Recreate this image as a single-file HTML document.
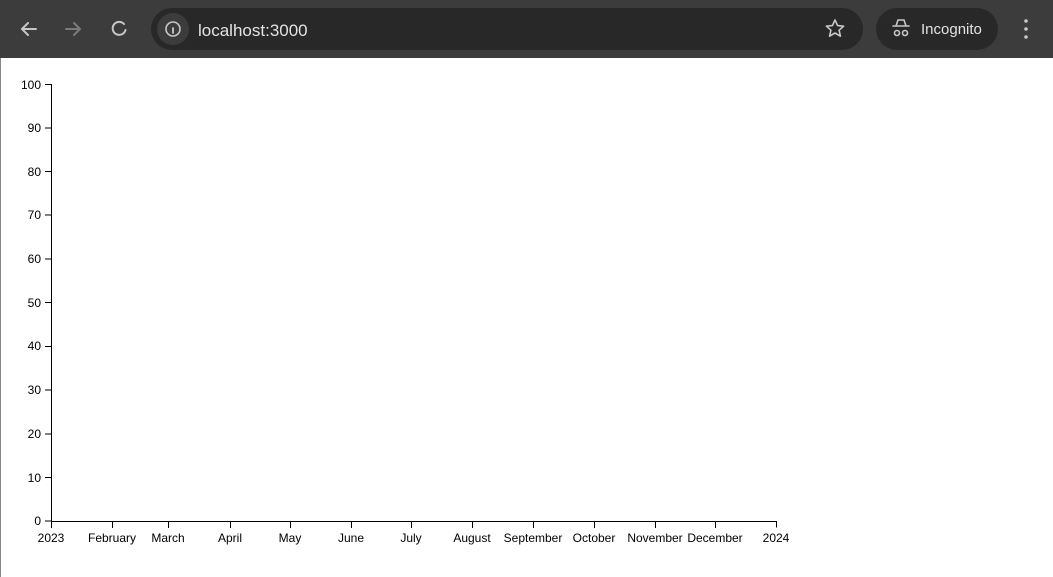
<!DOCTYPE html>
<html><head><style>
body{margin:0;width:1053px;height:577px;overflow:hidden;background:#fff;font-family:"Liberation Sans",Arial,sans-serif;}
.bar{position:absolute;left:0;top:0;width:1053px;height:58px;background:#3c3c3c;}
.omni{position:absolute;left:151px;top:8px;width:712px;height:42px;border-radius:21px;background:#282828;}
.info{position:absolute;left:157px;top:13px;width:32px;height:32px;border-radius:16px;background:#3c3c3c;}
.url{position:absolute;left:198px;top:21px;color:#e3e3e3;font-size:17px;}
.inc{position:absolute;left:876px;top:8px;width:122px;height:42px;border-radius:21px;background:#282828;}
.inct{position:absolute;left:921px;top:21px;color:#e3e3e3;font-size:15px;}
.lb{position:absolute;left:0;top:58px;width:1px;height:519px;background:#888;}
svg{position:absolute;left:0;top:0}
</style></head><body>
<div class="bar"></div><div class="omni"></div><div class="info"></div>
<div class="url">localhost:3000</div>
<div class="inc"></div><div class="inct">Incognito</div>
<div class="lb"></div>
<svg width="1053" height="577" xmlns="http://www.w3.org/2000/svg">
<g stroke="#c7c7c7" stroke-width="2" fill="none" stroke-linecap="round">
<path d="M36 29H22M28 23l-6 6 6 6"/>
<path d="M66 29h14M74 23l6 6-6 6" stroke="#7a7a7a"/>
<path d="M124 24a6.5 6.5 0 1 0 1.5 6"/>
<circle cx="173" cy="29" r="7" stroke-width="1.6"/>
<path d="M173 28v5" stroke-width="1.8"/>
<path d="M835 20l2.6 5.6 6 .6-4.5 4 1.3 6-5.4-3.2-5.4 3.2 1.3-6-4.5-4 6-.6z" stroke-width="1.6" stroke-linejoin="round"/>
<path d="M893 26h16M896 26l2-6h6l2 6" stroke-width="1.6"/>
<circle cx="897" cy="33" r="2.5" stroke-width="1.6"/><circle cx="905" cy="33" r="2.5" stroke-width="1.6"/>
</g>
<g fill="#c7c7c7"><circle cx="1026" cy="21" r="1.8"/><circle cx="1026" cy="29" r="1.8"/><circle cx="1026" cy="37" r="1.8"/></g>
<g stroke="#000" stroke-width="1" fill="none" shape-rendering="crispEdges">
<path d="M45 84.5H51.5V521.5H776.5v6"/>
<path d="M45 128h6M45 171.5h6M45 215h6M45 259h6M45 302.5h6M45 346.5h6M45 390h6M45 434h6M45 477.5h6M45 521h6"/>
<path d="M51.5 521v7M112.5 521v7M168.5 521v7M230.5 521v7M290.5 521v7M351.5 521v7M411.5 521v7M472.5 521v7M533.5 521v7M594.5 521v7M655.5 521v7M715.5 521v7"/>
</g>
<g font-size="12" fill="#000" text-anchor="end" font-family="Liberation Sans,Arial,sans-serif">
<text x="41" y="89">100</text><text x="41" y="132">90</text><text x="41" y="176">80</text><text x="41" y="219">70</text><text x="41" y="263">60</text><text x="41" y="307">50</text><text x="41" y="350">40</text><text x="41" y="394">30</text><text x="41" y="438">20</text><text x="41" y="482">10</text><text x="41" y="525">0</text>
</g>
<g font-size="12" fill="#000" text-anchor="middle" font-family="Liberation Sans,Arial,sans-serif">
<text x="51" y="542">2023</text><text x="112" y="542">February</text><text x="168" y="542">March</text><text x="230" y="542">April</text><text x="290" y="542">May</text><text x="351" y="542">June</text><text x="411" y="542">July</text><text x="472" y="542">August</text><text x="533" y="542">September</text><text x="594" y="542">October</text><text x="655" y="542">November</text><text x="715" y="542">December</text><text x="776" y="542">2024</text>
</g>
</svg>
</body></html>
